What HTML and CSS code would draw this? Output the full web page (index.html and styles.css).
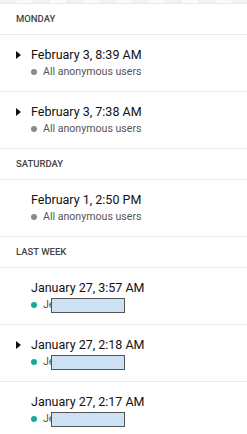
FILE: index.html
```html
<!DOCTYPE html>
<html lang="en">
	<head>
		<meta charset="UTF-8">
		<title>Activity</title>
		<link rel="stylesheet" href="styles.css">
	</head>
	<body>
	<div class="top-strip"></div>
	<div class="group-title">Monday</div>
	<div class="entry">
		<div class="toggle"><svg width="5" height="8" viewBox="0 0 5 8"><polygon points="0,0 5,4 0,8" fill="#111"/></svg></div>
		<div>
			<div class="date">February 3, 8:39 AM</div>
			<div class="who"><span class="dot"></span>All anonymous users</div>
		</div>
	</div>
	<div class="entry">
		<div class="toggle"><svg width="5" height="8" viewBox="0 0 5 8"><polygon points="0,0 5,4 0,8" fill="#111"/></svg></div>
		<div>
			<div class="date">February 3, 7:38 AM</div>
			<div class="who"><span class="dot"></span>All anonymous users</div>
		</div>
	</div>
	<div class="group-title">Saturday</div>
	<div class="entry">
		<div class="toggle"></div>
		<div>
			<div class="date">February 1, 2:50 PM</div>
			<div class="who"><span class="dot"></span>All anonymous users</div>
		</div>
	</div>
	<div class="group-title">Last week</div>
	<div class="entry">
		<div class="toggle"></div>
		<div>
			<div class="date">January 27, 3:57 AM</div>
			<div class="who"><span class="dot user"></span>Je<span class="redacted"></span></div>
		</div>
	</div>
	<div class="entry">
		<div class="toggle"><svg width="5" height="8" viewBox="0 0 5 8"><polygon points="0,0 5,4 0,8" fill="#111"/></svg></div>
		<div>
			<div class="date">January 27, 2:18 AM</div>
			<div class="who"><span class="dot user"></span>Je<span class="redacted"></span></div>
		</div>
	</div>
	<div class="entry">
		<div class="toggle"></div>
		<div>
			<div class="date">January 27, 2:17 AM</div>
			<div class="who"><span class="dot user"></span>Je<span class="redacted"></span></div>
		</div>
	</div>
	</body>
</html>
```

FILE: styles.css
```css
body {
	margin: 0;
	font-family: Roboto, "Liberation Sans", sans-serif;
	background-color: #fff;
}

.top-strip {
	height: 3px;
	border-bottom: 1px solid #ebebeb;
	background: repeating-linear-gradient(90deg, #f1f1f1 0 17px, #fafafa 17px 33px);
}

.group-title {
	height: 30px;
	line-height: 30px;
	padding-left: 16px;
	font-size: 9.5px;
	font-weight: 500;
	text-transform: uppercase;
	color: #444;
	border-bottom: 1px solid #ebebeb;
}

.entry {
	display: flex;
	padding: 11px 0 11px 16px;
	border-bottom: 1px solid #ebebeb;
}

.toggle {
	width: 15px;
	height: 18px;
	display: flex;
	align-items: center;
}

.toggle svg {
	display: block;
}

.date {
	font-size: 12.5px;
	line-height: 18px;
	color: #111;
}

.who {
	display: flex;
	align-items: center;
	font-size: 10.6px;
	line-height: 16px;
	color: #555;
}

.dot {
	width: 6px;
	height: 6px;
	border-radius: 50%;
	background-color: #8a8a8a;
	margin-right: 6px;
}

.dot.user {
	background-color: #17a998;
}

.redacted {
	width: 72px;
	height: 13px;
	margin-left: -3px;
	background-color: #cde1f5;
	border: 1px solid #555;
}
```
